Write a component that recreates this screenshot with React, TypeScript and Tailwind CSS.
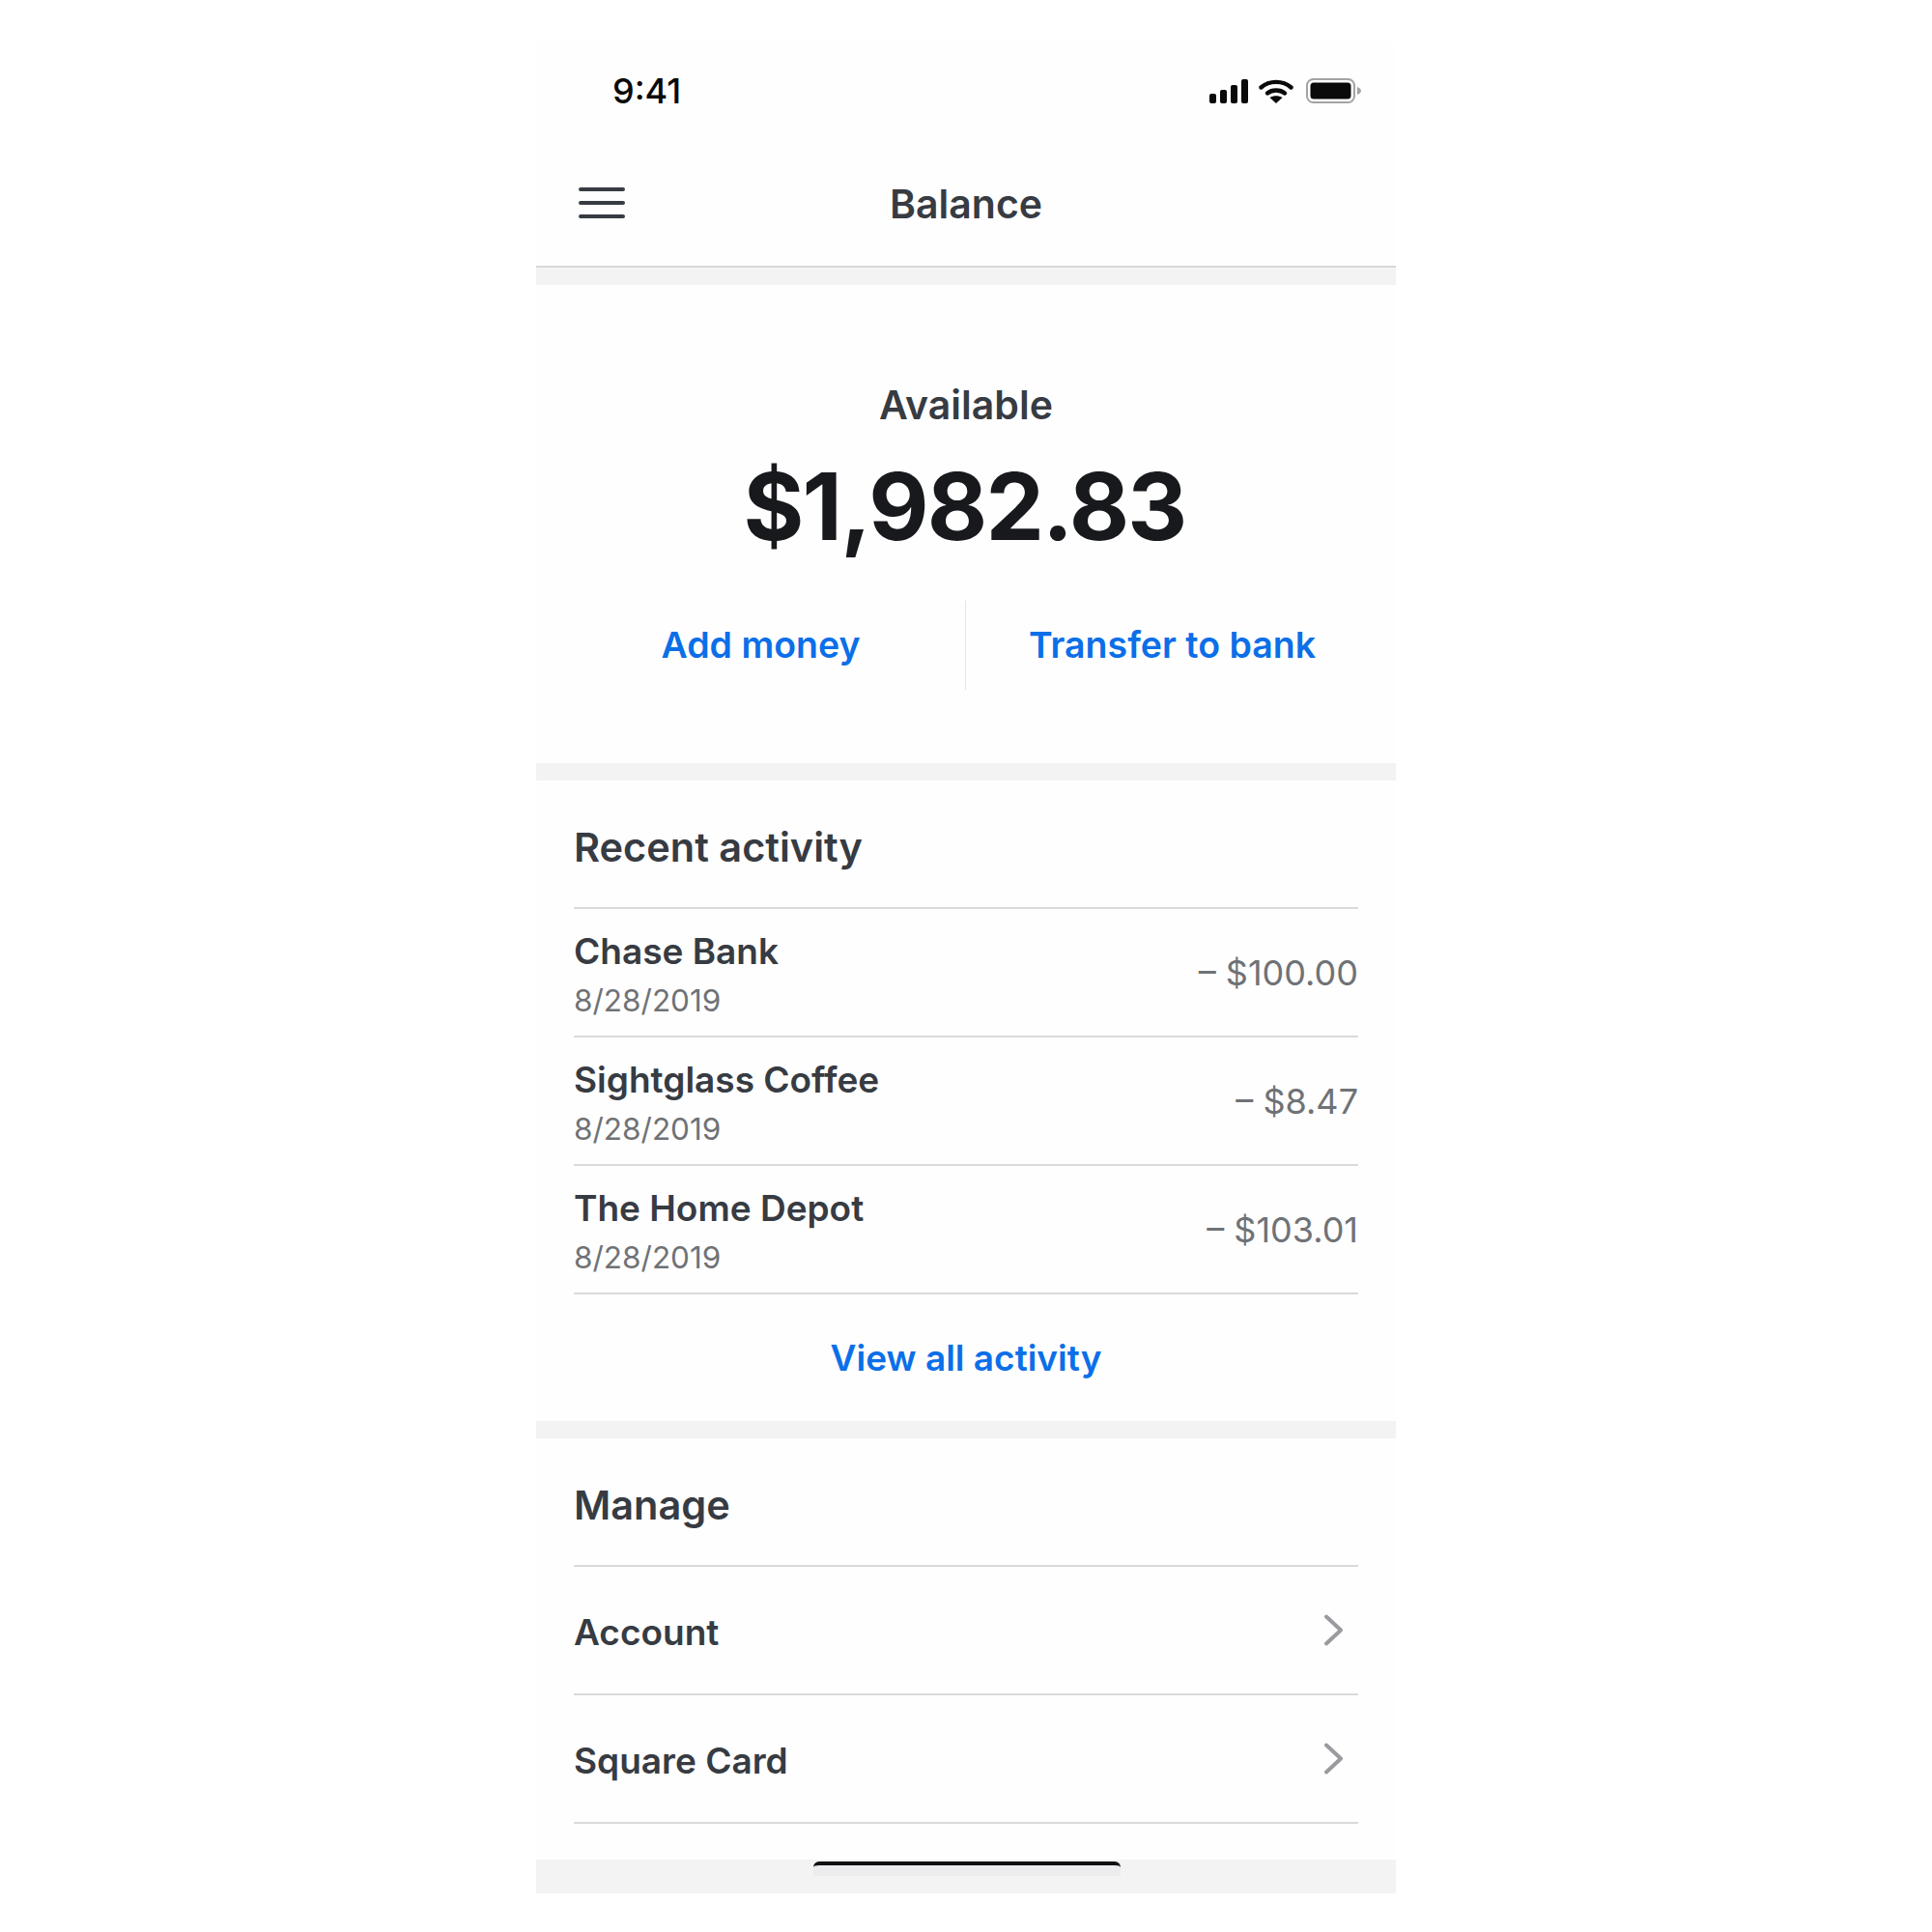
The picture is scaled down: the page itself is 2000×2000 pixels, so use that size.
const activity = [
  { name: "Chase Bank", date: "8/28/2019", amount: "– $100.00" },
  { name: "Sightglass Coffee", date: "8/28/2019", amount: "– $8.47" },
  { name: "The Home Depot", date: "8/28/2019", amount: "– $103.01" },
];

function StatusIcons() {
  return (
    <div className="flex items-center">
      <svg width="40" height="25" viewBox="0 0 40 25" fill="#0a0a0a">
        <rect x="0" y="15" width="7" height="10" rx="2" />
        <rect x="11" y="11" width="7" height="14" rx="2" />
        <rect x="22" y="6" width="7" height="19" rx="2" />
        <rect x="33" y="0" width="7" height="25" rx="2" />
      </svg>
      <svg className="ml-[11px]" width="36" height="25" viewBox="0 0 36 25" fill="none">
        <path d="M2.500 8.500C11 1 25 1 33.500 8.500" stroke="#0a0a0a" strokeWidth="4.400" strokeLinecap="round" />
        <path d="M9 14.500C14 10.500 22 10.500 27 14.500" stroke="#0a0a0a" strokeWidth="4.400" strokeLinecap="round" />
        <path d="M18 25L11.500 19C15 16.500 21 16.500 24.500 19Z" fill="#0a0a0a" />
      </svg>
      <svg className="ml-[13px]" width="57" height="26" viewBox="0 0 57 26" fill="none">
        <rect x="1" y="1" width="49" height="24" rx="6.500" stroke="#a3a3a3" strokeWidth="2" />
        <rect x="4.500" y="4.500" width="42" height="17" rx="3.500" fill="#0a0a0a" />
        <path d="M53 9C55.500 10 57 11.500 57 13C57 14.500 55.500 16 53 17Z" fill="#a3a3a3" />
      </svg>
    </div>
  );
}

function Chevron() {
  return (
    <svg className="mr-[15px]" width="21" height="33" viewBox="0 0 21 33" fill="none">
      <path d="M3 2.500L18 16.500L3 30.500" stroke="#9a9b9f" strokeWidth="4" strokeLinecap="round" strokeLinejoin="round" />
    </svg>
  );
}

function Band() {
  return <div className="h-[18px] bg-[#f3f3f3]" />;
}

function ActivityRow({ name, date, amount }: { name: string; date: string; amount: string }) {
  return (
    <div className="flex h-[133px] items-center justify-between border-b-2 border-[#d9dadd]">
      <div className="pt-[7px]">
        <div className="text-[37px] leading-[52px] font-semibold text-[#373b42]">{name}</div>
        <div className="text-[31.5px] leading-[50px] text-[#6f7276]">{date}</div>
      </div>
      <div className="text-[36px] text-[#6f7276]">{amount}</div>
    </div>
  );
}

function ManageRow({ label }: { label: string }) {
  return (
    <div className="flex h-[133px] items-center justify-between border-b-2 border-[#d9dadd]">
      <span className="pt-[4px] text-[37px] font-semibold text-[#373b42]">{label}</span>
      <Chevron />
    </div>
  );
}

export default function App() {
  return (
    <div className="min-h-[2000px] bg-white pt-[43px] font-['Inter','Liberation_Sans',sans-serif]">
      <div className="mx-auto w-[890px] bg-[#fefefe]">
        <div className="flex h-[107px] items-center justify-between pr-[36px] pb-[5px] pl-[79px]">
          <span className="text-[36px] font-medium text-[#0a0a0a]">9:41</span>
          <StatusIcons />
        </div>
        <div className="relative flex h-[127px] items-center justify-center border-b-2 border-[#d6d7da] pb-[2px]">
          <div className="absolute top-[44px] left-[44px] flex w-[48px] flex-col gap-[10px]">
            <div className="h-[4px] rounded-full bg-[#373b42]" />
            <div className="h-[4px] rounded-full bg-[#373b42]" />
            <div className="h-[4px] rounded-full bg-[#373b42]" />
          </div>
          <span className="text-[41px] font-semibold text-[#373b42]">Balance</span>
        </div>
        <Band />

        <div className="flex h-[495px] flex-col items-center pt-[99px]">
          <div className="text-[41px] leading-[50px] font-semibold text-[#373b42]">Available</div>
          <div className="mt-[25px] mr-[3px] text-[96px] leading-[110px] font-bold tracking-[-1.800px] text-[#17191c]">$1,982.83</div>
          <div className="mt-[43px] grid h-[92px] w-full grid-cols-2">
            <div className="flex items-center justify-center border-r border-[#e4e5e7] pl-[21px] text-[37.5px] font-semibold text-[#0b6fe8]">Add money</div>
            <div className="flex items-center justify-center pr-[18px] text-[37.5px] font-semibold text-[#0b6fe8]">Transfer to bank</div>
          </div>
        </div>
        <Band />

        <div className="px-[39px]">
          <div className="flex h-[133px] items-center border-b-2 border-[#d9dadd] pt-[7px] text-[41.5px] font-semibold text-[#373b42]">Recent activity</div>
          {activity.map((row) => (
            <ActivityRow key={row.name} {...row} />
          ))}
        </div>
        <div className="flex h-[131px] items-center justify-center text-[37px] font-semibold text-[#0b6fe8]">View all activity</div>
        <Band />

        <div className="px-[39px]">
          <div className="flex h-[133px] items-center border-b-2 border-[#d9dadd] pt-[8px] text-[41.5px] font-semibold text-[#373b42]">Manage</div>
          <ManageRow label="Account" />
          <ManageRow label="Square Card" />
        </div>
        <div className="h-[37px]" />
        <div className="relative h-[35px] bg-[#f3f3f3]">
          <div className="absolute top-[2px] left-[287px] h-[15px] w-[318px] rounded-t-[6px] border-t-[4px] border-[#111] bg-[#ececee]" />
        </div>
      </div>
    </div>
  );
}
